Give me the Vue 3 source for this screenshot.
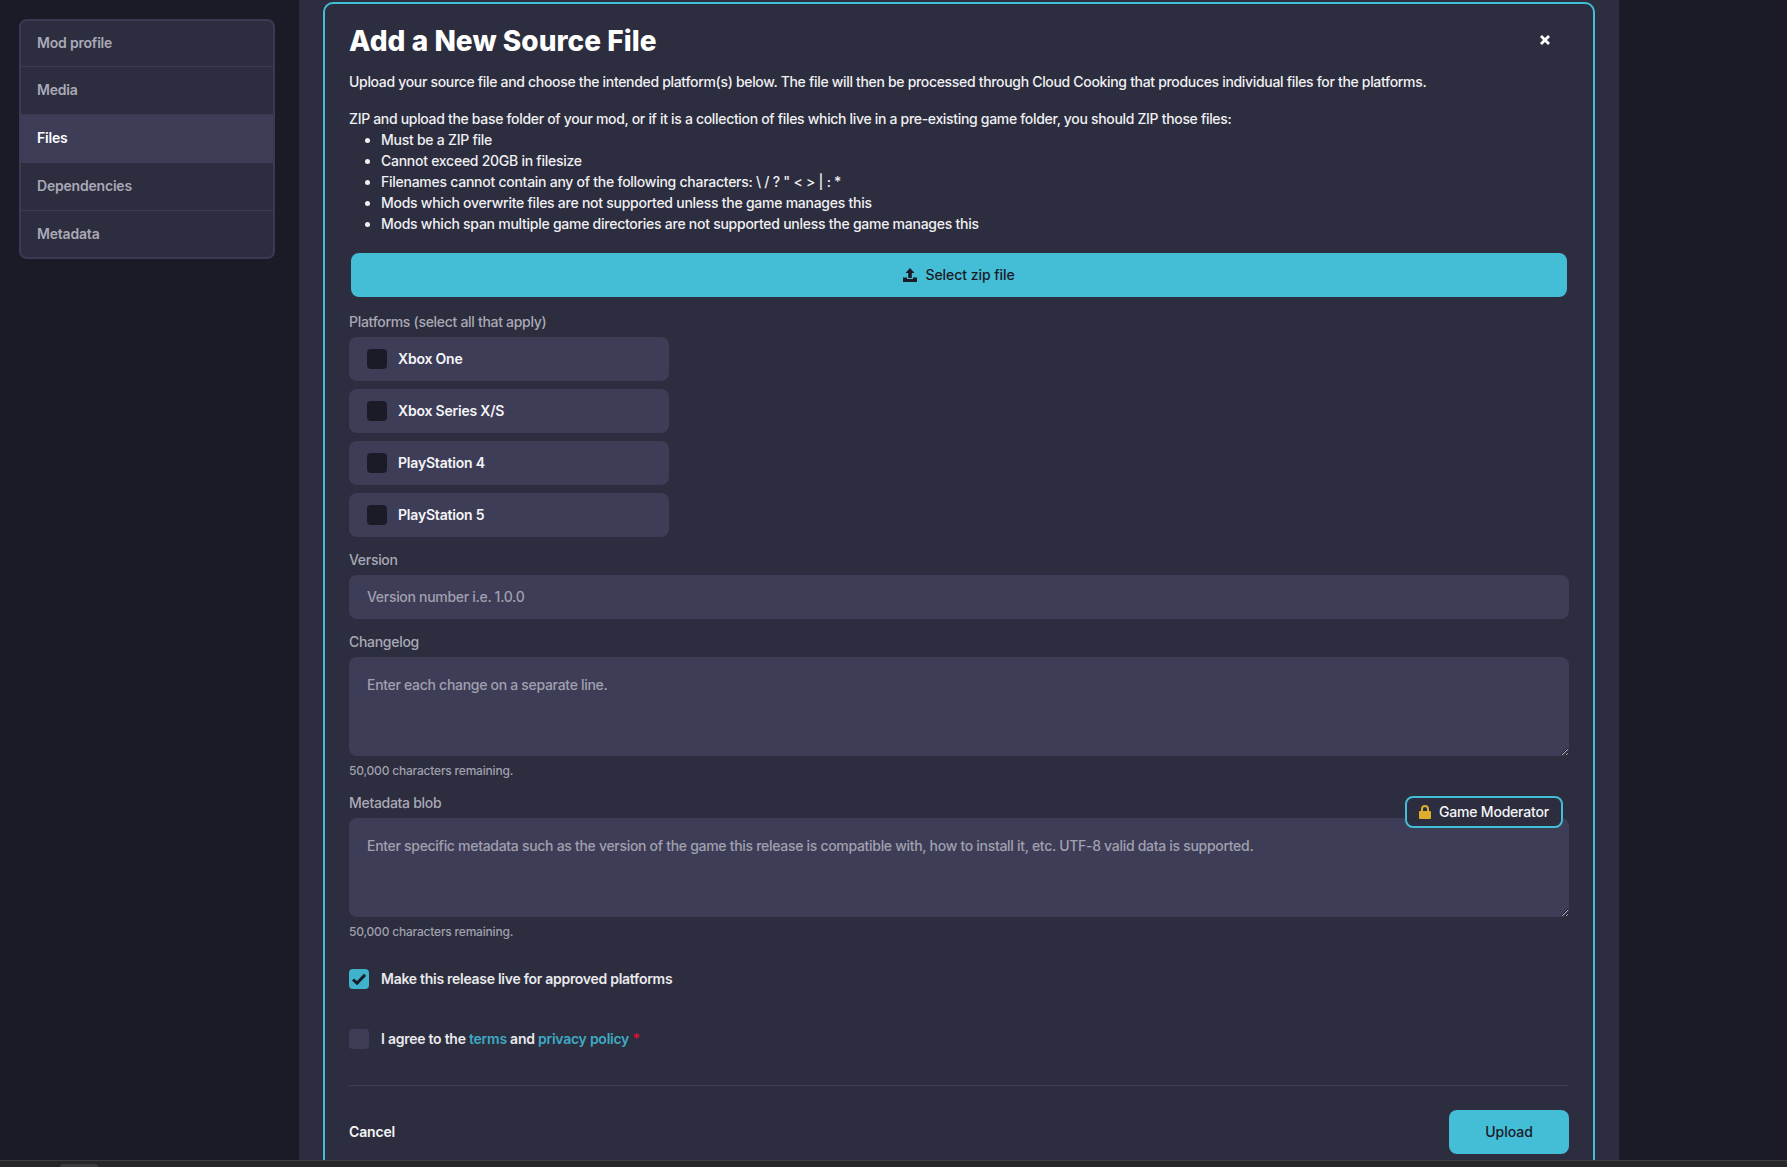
<script setup>
const navItems = ['Mod profile', 'Media', 'Files', 'Dependencies', 'Metadata']
const rules = [
  'Must be a ZIP file',
  'Cannot exceed 20GB in filesize',
  'Filenames cannot contain any of the following characters: \\ / ? " < > | : *',
  'Mods which overwrite files are not supported unless the game manages this',
  'Mods which span multiple game directories are not supported unless the game manages this',
]
const platforms = ['Xbox One', 'Xbox Series X/S', 'PlayStation 4', 'PlayStation 5']
</script>

<template>
  <div class="page">
    <div class="shell">
      <aside class="side">
        <nav class="nav">
          <a v-for="item in navItems" :key="item" class="nav-item" :class="{ active: item === 'Files' }">{{ item }}</a>
        </nav>
      </aside>

      <main class="panel">
        <section class="modal">
          <header class="modal-head">
            <h1>Add a New Source File</h1>
            <button class="close" aria-label="Close">
              <svg viewBox="0 0 10 10" width="10" height="10">
                <path d="M1 1l8 8M9 1L1 9" stroke="#fff" stroke-width="2.8" fill="none" />
              </svg>
            </button>
          </header>

          <p class="intro">Upload your source file and choose the intended platform(s) below. The file will then be processed through Cloud Cooking that produces individual files for the platforms.</p>
          <p class="intro">ZIP and upload the base folder of your mod, or if it is a collection of files which live in a pre-existing game folder, you should ZIP those files:</p>
          <ul class="rules">
            <li v-for="rule in rules" :key="rule">{{ rule }}</li>
          </ul>

          <button class="select-file">
            <svg viewBox="0 0 14 14" width="14" height="14">
              <path d="M7 0L11.5 5H8.8V10H5.2V5H2.5Z" fill="#1a1b26" />
              <path d="M0 9.5H4V11H10V9.5H14V14H0Z" fill="#1a1b26" />
            </svg>
            <span class="tx">Select zip file</span>
          </button>

          <div class="label platforms-label">Platforms (select all that apply)</div>
          <div class="platforms">
            <label v-for="p in platforms" :key="p" class="platform">
              <span class="box"></span>
              <span class="tx">{{ p }}</span>
            </label>
          </div>

          <div class="field version">
            <div class="label">Version</div>
            <input class="control" type="text" placeholder="Version number i.e. 1.0.0" />
          </div>

          <div class="field changelog">
            <div class="label">Changelog</div>
            <textarea class="control area" placeholder="Enter each change on a separate line."></textarea>
            <div class="note">50,000 characters remaining.</div>
          </div>

          <div class="field blob">
            <div class="label">Metadata blob</div>
            <div class="badge">
              <svg viewBox="0 0 12 14" width="12" height="14">
                <path d="M3 6.5V4a3 3 0 0 1 6 0v2.5" stroke="#dcae2c" stroke-width="2" fill="none" />
                <rect x="0" y="6" width="12" height="8" rx="1" fill="#dcae2c" />
              </svg>
              <span class="tx">Game Moderator</span>
            </div>
            <textarea class="control area" placeholder="Enter specific metadata such as the version of the game this release is compatible with, how to install it, etc. UTF-8 valid data is supported."></textarea>
            <div class="note">50,000 characters remaining.</div>
          </div>

          <label class="check live">
            <span class="tick">
              <svg viewBox="0 0 14 12" width="14" height="12">
                <path d="M1 6.5L5 10.2L13 1.8" stroke="#1a1b26" stroke-width="3" fill="none" />
              </svg>
            </span>
            <span class="tx">Make this release live for approved platforms</span>
          </label>

          <label class="check agree">
            <span class="box empty"></span>
            <span class="tx">I agree to the <a class="link">terms</a> and <a class="link">privacy policy</a> <em class="req">*</em></span>
          </label>

          <footer class="modal-foot">
            <a class="cancel tx">Cancel</a>
            <button class="upload"><span class="tx">Upload</span></button>
          </footer>
        </section>
      </main>
    </div>
    <div class="taskbar"><span class="tab"></span></div>
  </div>
</template>

<style>
html, body {
  margin: 0;
  background: #1a1b26;
}
</style>

<style scoped>
* {
  box-sizing: border-box;
}

.page {
  width: 1787px;
  height: 1167px;
  overflow: hidden;
  display: flex;
  flex-direction: column;
  font: 500 14px/21px Inter, "Liberation Sans", sans-serif;
  letter-spacing: -0.3px;
  color: #f0f0f3;
}

/* nudges text up a pixel inside centred rows */
.tx {
  display: block;
  margin-bottom: 2px;
}

.shell {
  height: 1160px;
  overflow: hidden;
  display: flex;
  background: #1a1b26;
}

.side {
  width: 299px;
  padding: 19px 24px 0 19px;
}

.nav {
  display: flex;
  flex-direction: column;
  border: 2px solid #3b3a55;
  border-radius: 8px;
  background: #2c2d3e;
  overflow: hidden;
  height: 240px;
}

.nav-item {
  height: 48px;
  display: flex;
  align-items: center;
  padding: 0 0 2px 16px;
  font-weight: 600;
  letter-spacing: -0.2px;
  color: #a9a9b6;
  border-bottom: 1px solid #3b3a55;
}

.nav-item:first-child,
.nav-item:last-child {
  height: 46px;
}

.nav-item:last-child {
  border-bottom: 0;
}

.nav-item.active {
  padding-bottom: 4px;
  background: #3e3d58;
  color: #fff;
  border-bottom: 0;
}

.panel {
  width: 1320px;
  padding: 2px 24px 0;
  background: #2c2d3e;
}

.modal {
  width: 1272px;
  padding: 17px 24px 24px;
  border: 2px solid #44bdd6;
  border-radius: 10px;
}

.modal-head {
  display: flex;
  align-items: center;
  justify-content: space-between;
  height: 40px;
  margin-bottom: 10px;
}

h1 {
  margin: 0;
  font-size: 28px;
  line-height: 40px;
  font-weight: 800;
  letter-spacing: 0.05px;
  color: #fff;
}

.close {
  border: 0;
  padding: 0;
  margin: 0 19px 2px 0;
  background: none;
  display: flex;
}

.intro {
  margin: 0 0 16px;
  letter-spacing: -0.32px;
}

.intro + .rules {
  margin-top: -16px;
}

.rules {
  margin: 0;
  padding-left: 32px;
  letter-spacing: -0.26px;
}

.select-file {
  width: 1216px;
  height: 44px;
  margin: 19px 2px 0;
  display: flex;
  align-items: center;
  justify-content: center;
  gap: 8px;
  border: 0;
  border-radius: 8px;
  background: #44bdd6;
  color: #1a1b26;
  font: inherit;
  letter-spacing: -0.05px;
}

.label {
  color: #a9a9b6;
  height: 21px;
}

.platforms-label {
  margin-top: 14px;
}

.platforms {
  display: flex;
  flex-direction: column;
  gap: 8px;
  width: 320px;
  margin-top: 5px;
}

.platform {
  height: 44px;
  display: flex;
  align-items: center;
  gap: 11px;
  padding-left: 18px;
  border-radius: 8px;
  background: #3e3d58;
  font-weight: 600;
  letter-spacing: -0.2px;
  color: #f5f5f7;
}

.box {
  width: 20px;
  height: 20px;
  border-radius: 4px;
  background: #1a1b26;
}

.box.empty {
  background: #3e3d58;
}

.field {
  position: relative;
  margin-top: 12px;
}

.field.blob {
  margin-top: 13px;
}

.control {
  display: block;
  width: 100%;
  height: 44px;
  margin-top: 5px;
  padding: 0 18px 1px;
  border: 0;
  border-radius: 8px;
  outline: 0;
  background: #3e3d58;
  color: #f0f0f3;
  font: inherit;
  letter-spacing: -0.3px;
}

.control::placeholder {
  color: #a0a0ae;
  opacity: 1;
}

.area {
  height: 99px;
  padding: 17px 18px;
}

.note {
  margin-top: 7px;
  font-size: 12px;
  line-height: 16px;
  letter-spacing: -0.2px;
  color: #a0a0ae;
}

.badge {
  position: absolute;
  top: 4px;
  right: 6px;
  width: 158px;
  height: 32px;
  display: flex;
  align-items: center;
  gap: 8px;
  padding-left: 12px;
  border: 2px solid #44bdd6;
  border-radius: 8px;
  background: #2c2d3e;
  letter-spacing: -0.2px;
  color: #f5f5f7;
}

.check {
  display: flex;
  align-items: center;
  gap: 12px;
  height: 20px;
  font-weight: 600;
  letter-spacing: -0.28px;
  color: #e9e9ed;
}

.live {
  margin-top: 29px;
}

.agree {
  margin-top: 40px;
  letter-spacing: -0.25px;
}

.tick {
  width: 20px;
  height: 20px;
  display: flex;
  align-items: center;
  justify-content: center;
  border-radius: 4px;
  background: #3fb3cc;
}

.link {
  color: #3fa9c4;
}

.req {
  font-style: normal;
  color: #e0102f;
}

.modal-foot {
  display: flex;
  align-items: center;
  justify-content: space-between;
  margin-top: 36px;
  padding-top: 24px;
  border-top: 1px solid #3e3d58;
}

.cancel {
  font-weight: 600;
  letter-spacing: -0.15px;
  color: #f5f5f7;
}

.upload {
  width: 120px;
  height: 44px;
  display: flex;
  align-items: center;
  justify-content: center;
  border: 0;
  border-radius: 8px;
  background: #44bdd6;
  color: #1a1b26;
  font: inherit;
  letter-spacing: 0;
}

.taskbar {
  height: 7px;
  background: #26262a;
  border-top: 1px solid #3d3d40;
  padding: 3px 0 0 60px;
}

.tab {
  display: block;
  width: 38px;
  height: 3px;
  border-radius: 3px 3px 0 0;
  background: #3a3a3c;
}
</style>
